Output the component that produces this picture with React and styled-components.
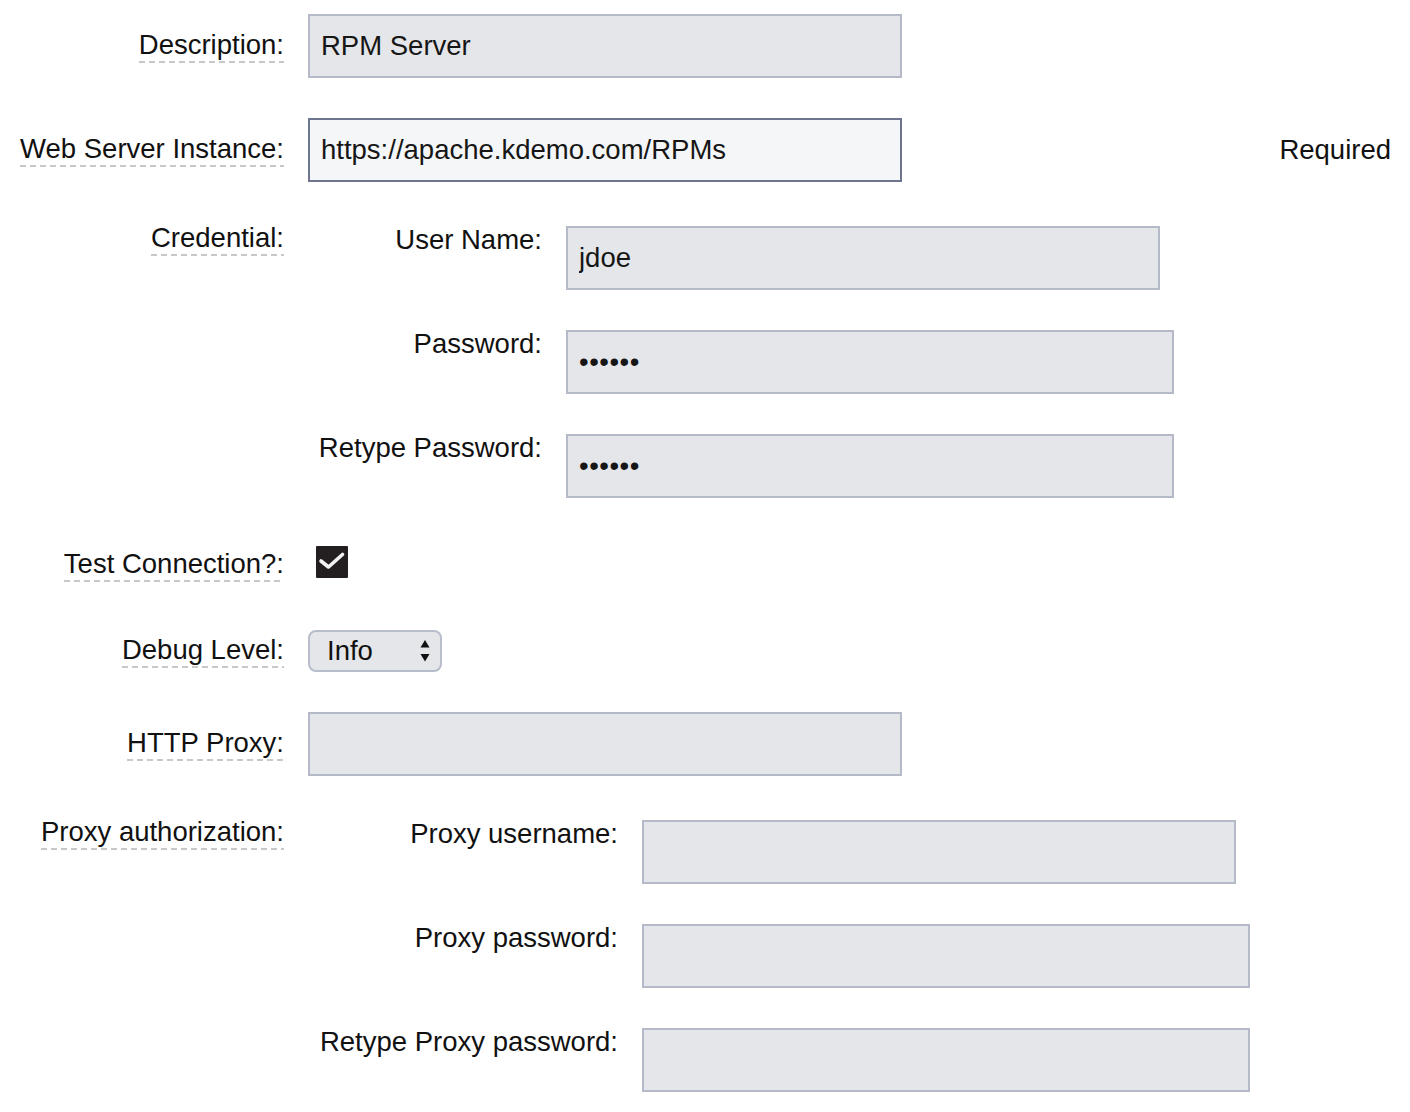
import React from "react";
import styled, { createGlobalStyle } from "styled-components";

const Global = createGlobalStyle`
  html, body { margin: 0; padding: 0; background: #ffffff; }
  body {
    font-family: "Liberation Sans", Arial, Helvetica, sans-serif;
    font-size: 27.5px;
    color: #111111;
  }
`;

const Form = styled.form`
  display: flex;
  flex-direction: column;
  padding-top: 14px;
  padding-bottom: 20px;
  width: 1410px;
  box-sizing: border-box;
`;

const Row = styled.div`
  display: grid;
  grid-template-columns: 284px 1fr auto;
  column-gap: 24px;
  align-items: ${(p) => (p.$top ? "start" : "center")};
  margin-top: ${(p) => p.$mt || 0}px;
  padding-right: 19px;
`;

const LabelCell = styled.div`
  display: flex;
  justify-content: flex-end;
  margin-top: ${(p) => p.$offset || 0}px;
`;

const Control = styled.div`
  display: flex;
  align-items: center;
`;

const FieldLabel = styled.label`
  display: inline-block;
  line-height: 32px;
  white-space: nowrap;
  padding-bottom: 2px;
  background-image: repeating-linear-gradient(
    to right,
    #c8c8c8 0,
    #c8c8c8 6px,
    transparent 6px,
    transparent 10px
  );
  background-size: 100% 2px;
  background-repeat: no-repeat;
  background-position: left bottom;
`;

const Note = styled.span`
  line-height: 32px;
  white-space: nowrap;
`;

const TextInput = styled.input`
  display: block;
  box-sizing: border-box;
  width: ${(p) => p.$w || 594}px;
  height: 64px;
  margin: 0;
  padding: 0 10px 0 11px;
  font: inherit;
  font-size: 27.5px;
  color: #161616;
  background: ${(p) => (p.$focus ? "#f5f6f8" : "#e5e6e9")};
  border: 2px solid ${(p) => (p.$focus ? "#6d7590" : "#b5bac8")};
  border-radius: 0;
  outline: none;
  letter-spacing: ${(p) => (p.type === "password" ? "0.5px" : "0")};
`;

const SubGrid = styled.div`
  display: grid;
  grid-template-columns: ${(p) => p.$labelWidth}px auto;
  column-gap: 24px;
  row-gap: 40px;
  align-items: start;
  justify-content: start;
`;

const SubLabel = styled.label`
  display: block;
  text-align: right;
  line-height: 32px;
  white-space: nowrap;
  margin-top: -2px;
`;

const CheckBox = styled.span`
  display: inline-flex;
  align-items: center;
  justify-content: center;
  width: 32px;
  height: 32px;
  margin: 0 0 6px 8px;
  background: #231f20;
  border-radius: 1px;
`;

const SelectBox = styled.div`
  box-sizing: border-box;
  width: 134px;
  height: 42px;
  display: flex;
  align-items: center;
  justify-content: space-between;
  padding: 0 9px 0 17px;
  background: #e5e6e9;
  border: 2px solid #b8bdcb;
  border-radius: 8px;
  line-height: 32px;
`;

const Arrows = styled.svg`
  display: block;
`;

const Field = ({ label, children, mt, note }) => (
  <Row $mt={mt}>
    <LabelCell>
      <FieldLabel>{label}</FieldLabel>
    </LabelCell>
    <Control>{children}</Control>
    <Note>{note}</Note>
  </Row>
);

const GroupField = ({ label, mt, labelWidth, items }) => (
  <Row $mt={mt} $top>
    <LabelCell $offset={-4}>
      <FieldLabel>{label}</FieldLabel>
    </LabelCell>
    <SubGrid $labelWidth={labelWidth}>
      {items.map((it) => (
        <React.Fragment key={it.label}>
          <SubLabel>{it.label}</SubLabel>
          <TextInput
            type={it.type || "text"}
            defaultValue={it.value || ""}
            $w={it.w}
            readOnly
          />
        </React.Fragment>
      ))}
    </SubGrid>
    <span />
  </Row>
);

export default function App() {
  return (
    <>
      <Global />
      <Form onSubmit={(e) => e.preventDefault()}>
        <Field label="Description:">
          <TextInput defaultValue="RPM Server" readOnly />
        </Field>
        <Field label="Web Server Instance:" mt={40} note="Required">
          <TextInput defaultValue="https://apache.kdemo.com/RPMs" $focus readOnly />
        </Field>
        <GroupField
          label="Credential:"
          mt={44}
          labelWidth={234}
          items={[
            { label: "User Name:", value: "jdoe", w: 594 },
            { label: "Password:", value: "secret", type: "password", w: 608 },
            { label: "Retype Password:", value: "secret", type: "password", w: 608 },
          ]}
        />
        <Field label="Test Connection?:" mt={48}>
          <CheckBox>
            <svg width="32" height="32" viewBox="0 0 32 32">
              <path
                d="M5 15 L12.5 21 L26.5 8.5"
                fill="none"
                stroke="#ffffff"
                strokeWidth="3.6"
                strokeLinecap="round"
                strokeLinejoin="round"
                opacity="0.95"
              />
            </svg>
          </CheckBox>
        </Field>
        <Field label="Debug Level:" mt={46}>
          <SelectBox>
            <span>Info</span>
            <Arrows width="12" height="28" viewBox="0 0 12 28">
              <path d="M6 3 L10.5 10.5 L1.5 10.5 Z" fill="#111" />
              <path d="M1.5 17 L10.5 17 L6 24.5 Z" fill="#111" />
            </Arrows>
          </SelectBox>
        </Field>
        <Field label="HTTP Proxy:" mt={40}>
          <TextInput readOnly />
        </Field>
        <GroupField
          label="Proxy authorization:"
          mt={44}
          labelWidth={310}
          items={[
            { label: "Proxy username:", w: 594 },
            { label: "Proxy password:", type: "password", w: 608 },
            { label: "Retype Proxy password:", type: "password", w: 608 },
          ]}
        />
      </Form>
    </>
  );
}
